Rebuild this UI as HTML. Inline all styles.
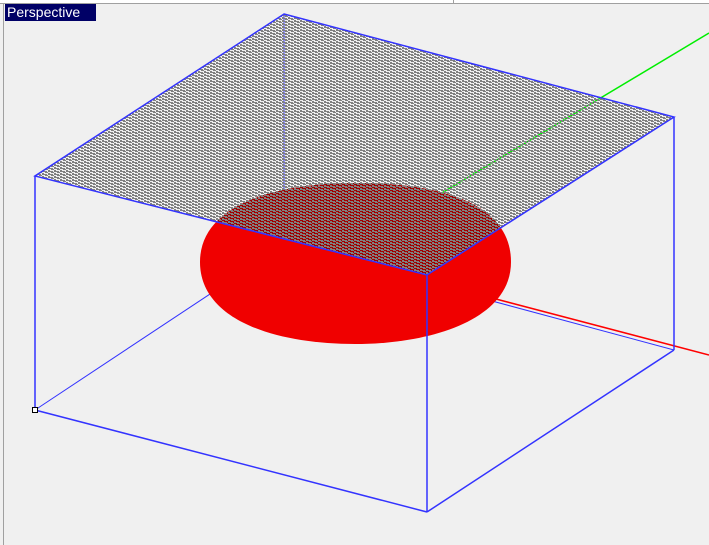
<!DOCTYPE html>
<html><head><style>
html,body{margin:0;padding:0;background:#f0f0f0;width:709px;height:545px;overflow:hidden}
#lbl{position:absolute;left:5px;top:4px;width:91px;height:17px;background:#000066;color:#fff;font:14px "Liberation Sans",sans-serif;line-height:17px;padding-left:2px;box-sizing:border-box}
</style></head><body>
<svg width="709" height="545" style="position:absolute;left:0;top:0" shape-rendering="crispEdges">
<defs>
<pattern id="m" width="6" height="3" patternUnits="userSpaceOnUse">
<rect x="0" y="0" width="5" height="1" fill="#808080"/>
<rect x="3" y="1" width="5" height="1" fill="#808080"/>
<rect x="0" y="2" width="2" height="1" fill="#808080"/>
</pattern>
<clipPath id="top"><polygon points="284,14 674,117 427,275 35,176"/></clipPath>
</defs>
<rect x="0" y="0" width="709" height="3" fill="#fff"/>
<line x1="0" y1="3.5" x2="709" y2="3.5" stroke="#a0a0a0" stroke-width="1"/>
<line x1="3.5" y1="3" x2="3.5" y2="545" stroke="#a0a0a0" stroke-width="1"/>
<line x1="453.5" y1="0" x2="453.5" y2="3" stroke="#a0a0a0"/>
<g shape-rendering="auto">
<line x1="35" y1="410" x2="284" y2="245" stroke="#3333ff"/>
<line x1="284" y1="245" x2="674" y2="350" stroke="#3333ff"/>
<line x1="284" y1="14" x2="284" y2="245" stroke="#3333ff"/>
<line x1="355" y1="262" x2="709" y2="355" stroke="#ff0000" stroke-width="1.5"/>
<line x1="355" y1="245" x2="709" y2="33" stroke="#00ee00" stroke-width="1.5"/>
<path d="M200,262 C200,203 280,183 355,183 C440,183 511,203 511,262 C511,320 430,344 355,344 C275,344 200,320 200,262 Z" fill="#f00000"/>
<g clip-path="url(#top)">
<path d="M200,262 C200,203 280,183 355,183 C440,183 511,203 511,262 C511,320 430,344 355,344 C275,344 200,320 200,262 Z" fill="#a00000"/>
<polygon points="284,14 674,117 427,275 35,176" fill="url(#m)" shape-rendering="crispEdges"/>
</g>
<g stroke="#3333ff" stroke-width="1.5" fill="none">
<polygon points="284,14 674,117 427,275 35,176"/>
<line x1="35" y1="176" x2="35" y2="410"/>
<line x1="427" y1="275" x2="427" y2="512"/>
<line x1="674" y1="117" x2="674" y2="350"/>
<line x1="35" y1="410" x2="427" y2="512"/>
<line x1="427" y1="512" x2="674" y2="350"/>
</g>
</g>
<rect x="32.5" y="407.5" width="5" height="5" fill="#fff" stroke="#000"/>
</svg>
<div id="lbl">Perspective</div>
</body></html>
